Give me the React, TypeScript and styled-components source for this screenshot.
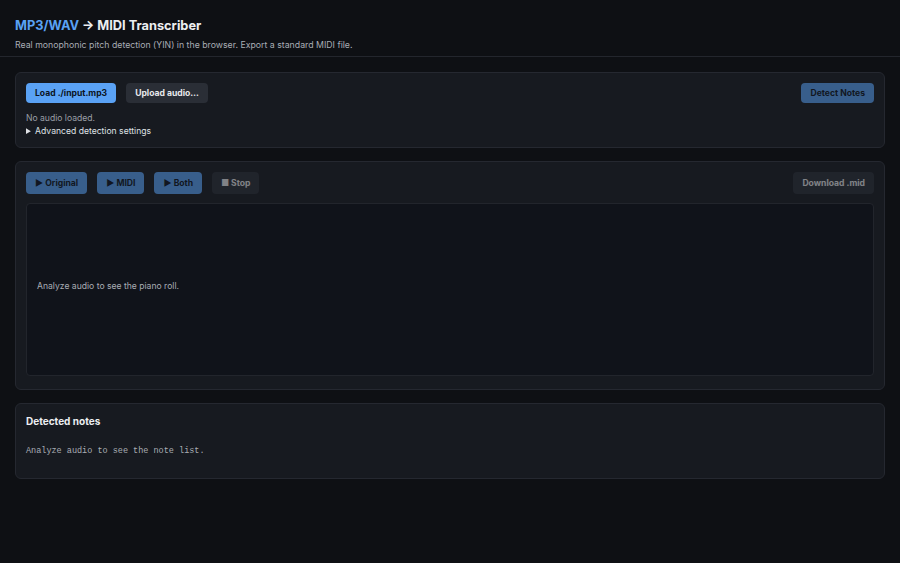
import styled, { createGlobalStyle } from 'styled-components';

const GlobalStyle = createGlobalStyle`
  html, body {
    margin: 0;
    padding: 0;
    background: #0e1014;
  }
  body {
    font-family: Inter, "Liberation Sans", Arial, sans-serif;
    color: #e6e7ea;
    -webkit-font-smoothing: antialiased;
  }
  * { box-sizing: border-box; }
`;

const Page = styled.div`
  min-height: 563px;
  background: #0e1014;
`;

const Header = styled.header`
  padding: 17px 15px 5px;
  border-bottom: 1px solid #23262d;
`;

const Title = styled.h1`
  margin: 0;
  font-size: 12.8px;
  line-height: 17px;
  font-weight: 700;
  color: #eceef1;
`;

const Accent = styled.span`
  color: #5aa2f5;
`;

const Subtitle = styled.p`
  margin: 5px 0 0;
  font-size: 8.75px;
  line-height: 12px;
  color: #a9adb4;
`;

const Main = styled.main`
  padding: 15px 15px;
  display: flex;
  flex-direction: column;
  gap: 13px;
`;

const Panel = styled.section`
  background: #171a20;
  border: 1px solid #252830;
  border-radius: 6px;
  padding: 10px 10px;
`;

const Toolbar = styled.div`
  display: flex;
  align-items: center;
  gap: 10px;
`;

const Spacer = styled.div`
  flex: 1;
`;

const Button = styled.button<{ $variant?: 'primary' | 'secondary'; $tall?: boolean }>`
  font-family: inherit;
  font-size: 8.6px;
  font-weight: 700;
  height: ${(p) => (p.$tall ? '22px' : '20px')};
  padding: 0 9px;
  border: none;
  border-radius: 4px;
  cursor: pointer;
  background: ${(p) => (p.$variant === 'primary' ? '#5aa2f5' : '#2a2e36')};
  color: ${(p) => (p.$variant === 'primary' ? '#0c1422' : '#e8e9ec')};
  &:disabled {
    opacity: 0.5;
    cursor: default;
  }
`;

const Status = styled.div`
  margin-top: 9px;
  font-size: 8.6px;
  line-height: 12px;
  color: #9a9fa7;
`;

const Details = styled.details`
  margin-top: 1px;
  font-size: 8.6px;
  line-height: 12px;
  color: #dfe1e5;
`;

const Summary = styled.summary`
  cursor: pointer;
  &::marker {
    font-size: 8.6px;
  }
`;

const Roll = styled.div`
  margin-top: 9px;
  height: 173px;
  margin-bottom: 3px;
  background: #10131a;
  border: 1px solid #22252c;
  border-radius: 4px;
  display: flex;
  align-items: center;
  padding: 0 10px 7px;
  font-size: 8.6px;
  color: #a9adb4;
`;

const SectionTitle = styled.h2`
  margin: 0;
  font-size: 10px;
  line-height: 14px;
  font-weight: 700;
  color: #eceef1;
`;

const Mono = styled.pre`
  margin: 17px 0 11px;
  font-family: "Liberation Mono", "DejaVu Sans Mono", monospace;
  font-size: 8.5px;
  line-height: 12px;
  color: #a9adb4;
`;

export default function App() {
  return (
    <Page>
      <GlobalStyle />
      <Header>
        <Title>
          <Accent>MP3/WAV</Accent> → MIDI Transcriber
        </Title>
        <Subtitle>
          Real monophonic pitch detection (YIN) in the browser. Export a standard MIDI file.
        </Subtitle>
      </Header>
      <Main>
        <Panel>
          <Toolbar>
            <Button $variant="primary">Load ./input.mp3</Button>
            <Button>Upload audio…</Button>
            <Spacer />
            <Button $variant="primary" disabled>
              Detect Notes
            </Button>
          </Toolbar>
          <Status>No audio loaded.</Status>
          <Details>
            <Summary>Advanced detection settings</Summary>
          </Details>
        </Panel>
        <Panel>
          <Toolbar>
            <Button $variant="primary" $tall disabled>▶ Original</Button>
            <Button $variant="primary" $tall disabled>▶ MIDI</Button>
            <Button $variant="primary" $tall disabled>▶ Both</Button>
            <Button $tall disabled>■ Stop</Button>
            <Spacer />
            <Button $tall disabled>Download .mid</Button>
          </Toolbar>
          <Roll>Analyze audio to see the piano roll.</Roll>
        </Panel>
        <Panel>
          <SectionTitle>Detected notes</SectionTitle>
          <Mono>Analyze audio to see the note list.</Mono>
        </Panel>
      </Main>
    </Page>
  );
}
